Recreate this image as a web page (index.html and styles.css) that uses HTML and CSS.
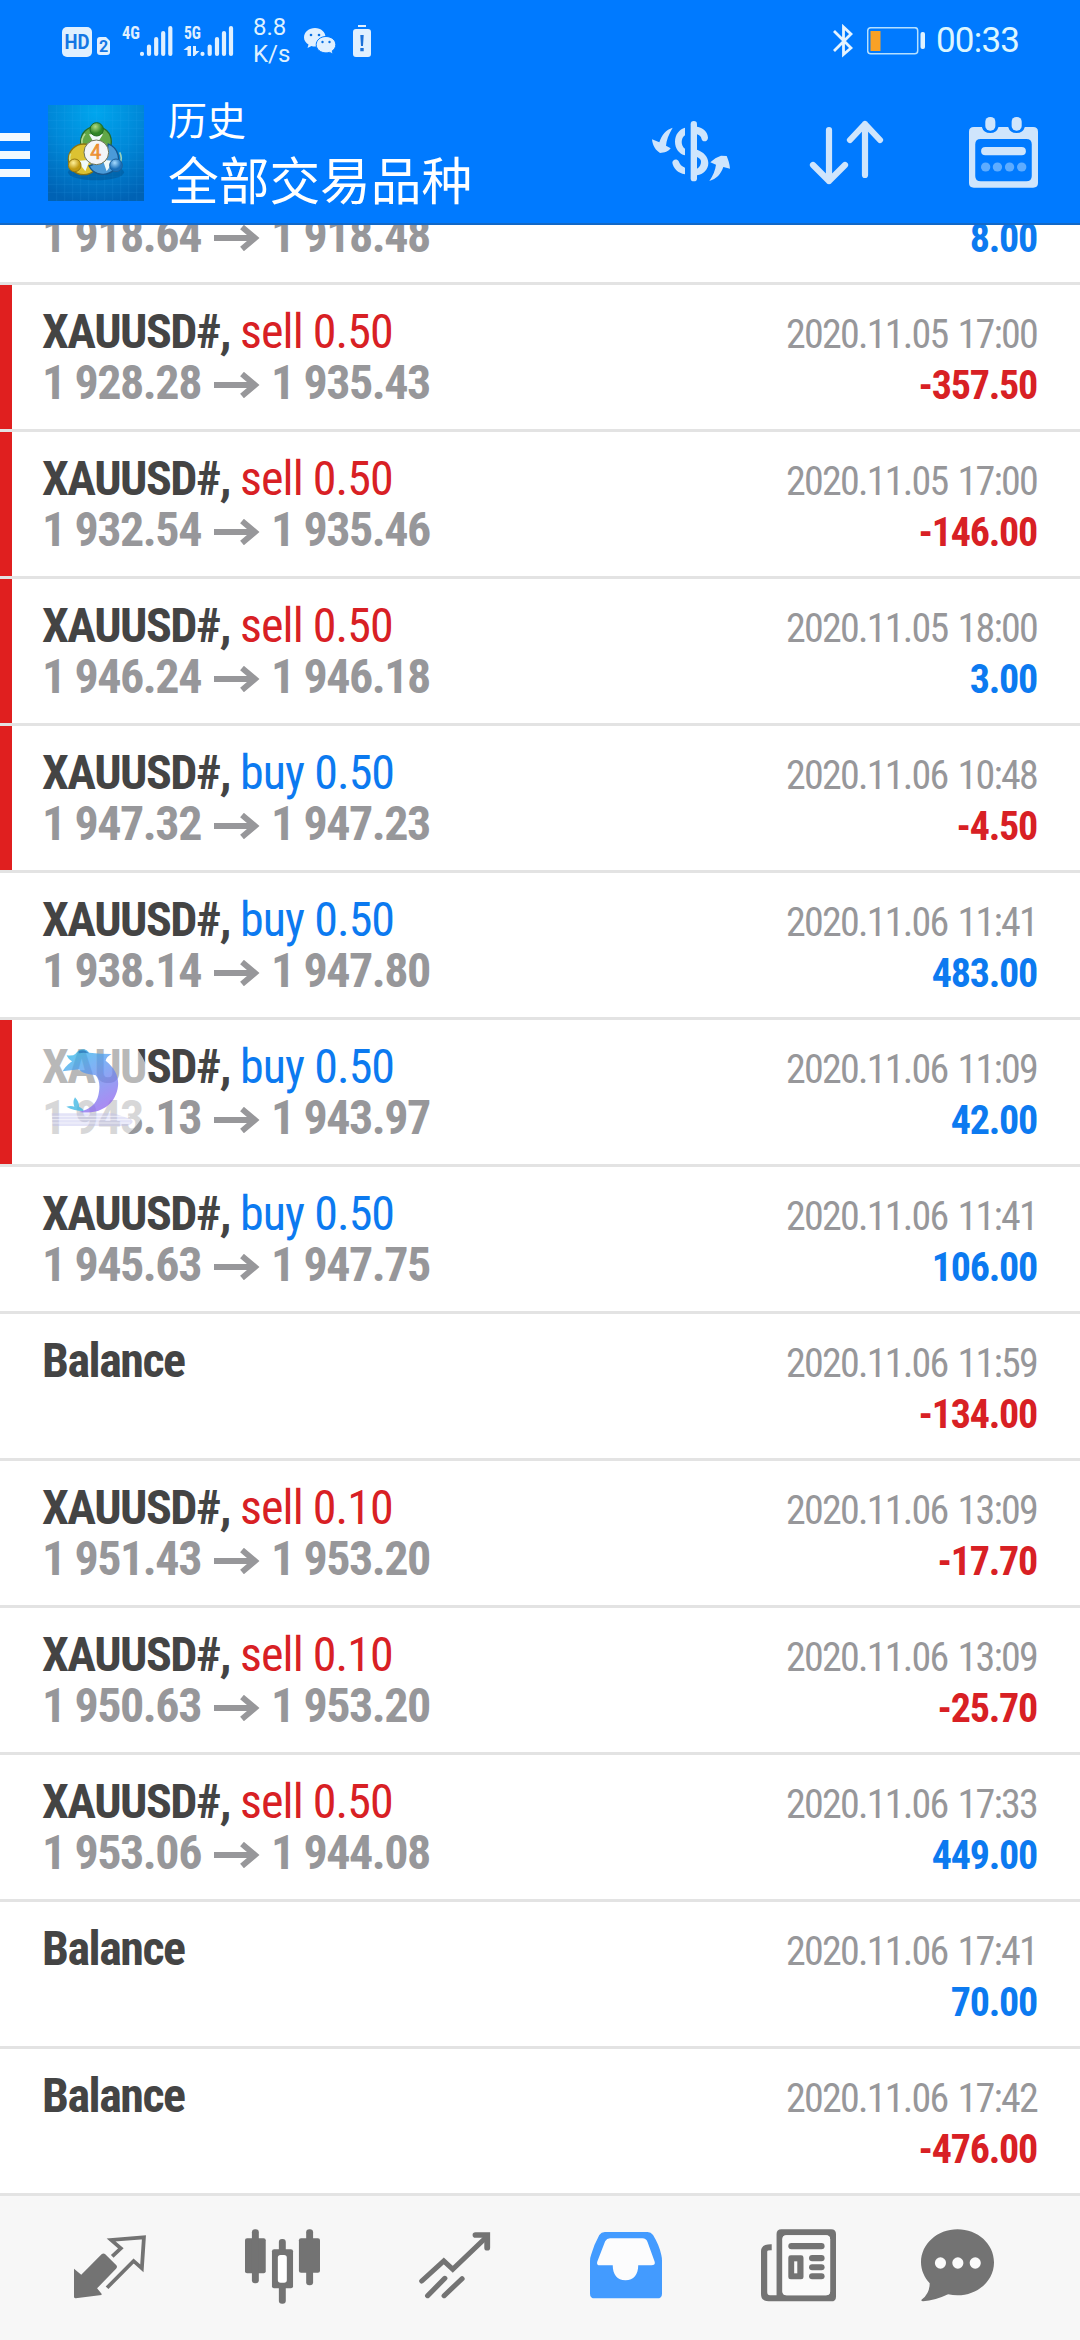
FILE: index.html
```html
<!DOCTYPE html>
<html lang="zh">
<head>
<meta charset="utf-8">
<title>历史</title>
<link rel="stylesheet" href="styles.css">
</head>
<body>
<svg class="defs" aria-hidden="true"><symbol id="arrow" viewBox="0 0 46 26"><path d="M0 13H41M28 2l13 11-13 11" fill="none" stroke="#97979a" stroke-width="5.800"/></symbol></svg>
<div class="screen">
  <header class="header">
    <div class="status">
      <svg class="status-net" width="172" height="36" viewBox="62 22 172 36" fill="#e0f0ff">
        <rect x="62" y="26" width="30" height="30" rx="5"/>
        <text x="77" y="48" class="hd" textLength="25" lengthAdjust="spacingAndGlyphs">HD</text>
        <path d="M97 39q0-3 3-3h6l4 4v11q0 3-3 3h-7q-3 0-3-3z"/>
        <text x="103.500" y="51" class="sim">2</text>
        <text x="131" y="38" class="net" textLength="18" lengthAdjust="spacingAndGlyphs">4G</text>
        <g stroke="#e0f0ff" stroke-width="4.200" stroke-linecap="round">
          <path d="M142 53v-.1M149 53v-7.500M156.200 53V38M163.200 53V32M170.300 53V27"/>
          <path d="M202.500 53v-.1M209.700 53v-7.500M217 53V38M224 53V32M231 53V27"/>
        </g>
        <text x="192.500" y="38" class="net" textLength="17" lengthAdjust="spacingAndGlyphs">5G</text>
        <path d="M187.500 55v-6h-4l5-4h2.500v10zM193 45h3v5h3.500l-5 5H193z"/>
      </svg>
      <div class="speed"><span>8.8</span><span>K/s</span></div>
      <svg class="status-chat" width="32" height="27" viewBox="304 28 32 27">
        <path fill="#e0f0ff" d="M315 28c6 0 10.500 4 10.500 9s-4.500 9.500-10.500 9.500c-1.500 0-2.500-.2-3.500-.6l-4 2 1-3.400C306 43 304 40.500 304 37.500c0-5.500 5-9.500 11-9.500z"/>
        <path fill="#e0f0ff" stroke="#007aff" stroke-width="1" d="M326 36.500c5.500 0 9.800 3.600 9.800 8.200 0 2.600-1.500 4.800-3.600 6.200l1 3.200-3.700-1.700c-1 .3-2.200.5-3.500.5-5.500 0-9.800-3.600-9.800-8.200s4.300-8.200 9.800-8.200z"/>
        <g fill="#0a6fe0"><circle cx="311" cy="35" r="1.300"/><circle cx="319" cy="35" r="1.300"/><circle cx="322.500" cy="42" r="1.200"/><circle cx="329.500" cy="42" r="1.200"/></g>
      </svg>
      <svg class="status-warn" width="18" height="32" viewBox="0 0 18 32">
        <path fill="#e0f0ff" d="M5 0h8v2H5zM3 4h12q3 0 3 3v22q0 3-3 3H3q-3 0-3-3V7q0-3 3-3z"/>
        <path fill="#1a70d8" d="M7.300 10h3.400l-.7 11H8zM7.300 23h3.400v3.200H7.300z"/>
      </svg>
      <span class="grow"></span>
      <svg width="20" height="34" viewBox="0 0 20 34" fill="none" stroke="#e6f4ff" stroke-width="2.800"><path d="M1 7l17 17-7.500 6.500V3L18 10 1 27"/></svg>
      <svg class="battery" width="60" height="28" viewBox="0 0 60 28"><rect x=".7" y=".7" width="50" height="26" rx="3" fill="none" stroke="#b5e0ff" stroke-width="1.500"/><rect x="3.500" y="4" width="10" height="20" fill="#f9a126"/><rect x="53.500" y="5" width="4.500" height="17" rx="2" fill="#dff2ff"/></svg>
      <span class="time">00:33</span>
    </div>
    <div class="appbar">
      <svg class="menu" width="30" height="44" viewBox="0 0 30 44" fill="#f2f9ff"><path d="M0 0h30v8H0zM0 18h30v8H0zM0 36h30v8H0z"/></svg>
      <svg class="logo" width="96" height="96" viewBox="24 30 288 288">
        <defs>
          <radialGradient id="bg" cx=".5" cy=".08" r=".95"><stop offset="0" stop-color="#00a6ee"/><stop offset=".5" stop-color="#0088d8"/><stop offset="1" stop-color="#0062b4"/></radialGradient>
          <radialGradient id="gr" cx=".4" cy=".3"><stop offset="0" stop-color="#b2dc84"/><stop offset="1" stop-color="#2f8527"/></radialGradient>
          <radialGradient id="ye" cx=".4" cy=".3"><stop offset="0" stop-color="#fff19a"/><stop offset="1" stop-color="#c29a10"/></radialGradient>
          <radialGradient id="bl" cx=".4" cy=".3"><stop offset="0" stop-color="#a6dbff"/><stop offset="1" stop-color="#1a6fb8"/></radialGradient>
        </defs>
        <path fill="url(#bg)" d="M24 30h288v288H24z"/>
        <path d="M50 30v288M74 30v288M98 30v288M122 30v288M146 30v288M170 30v288M194 30v288M218 30v288M242 30v288M266 30v288M290 30v288M24 52h288M24 76h288M24 100h288M24 124h288M24 148h288M24 172h288M24 196h288M24 220h288M24 244h288M24 268h288M24 292h288" stroke="#4cc0ff" stroke-opacity=".16" stroke-width="2"/>
        <ellipse cx="168" cy="232" rx="84" ry="24" fill="#003b70" opacity=".3"/>
        <circle cx="168" cy="140" r="46" fill="#62a747" stroke="#256b2b" stroke-width="4"/>
        <circle cx="131" cy="193" r="46" fill="#dcc232" stroke="#8b7410" stroke-width="4"/>
        <path d="M205 147a47 47 0 1 1-58 66q20-6 35-24 21-20 23-42z" fill="#4a9ad8" stroke="#15568e" stroke-width="4"/>
        <path d="M147 118l20 34 22-34zM112 198l38-4-14 35zM222 198l-34-4 12 35z" fill="#effafa"/>
        <path d="M135 116q-12 16-9 29M92 176q-8 18 4 32M239 172q9 18 1 30" fill="none" stroke="#d5f0b0" stroke-width="5" opacity=".7"/>
        <circle cx="170" cy="103" r="20" fill="url(#gr)" stroke="#1f6a22" stroke-width="3"/>
        <circle cx="104" cy="211" r="19" fill="url(#ye)" stroke="#987a0e" stroke-width="3"/>
        <circle cx="228" cy="211" r="19" fill="url(#bl)" stroke="#1c619c" stroke-width="3"/>
        <circle cx="169" cy="172" r="37" fill="#f4f5f7" stroke="#6b7358" stroke-width="3"/>
        <text x="167" y="193" class="logo-num">4</text>
      </svg>
      <div class="titles"><span class="sub">历史</span><span class="main">全部交易品种</span></div>
      <span class="grow"></span>
      <svg class="ic-dollar" width="80" height="64" viewBox="30 30 240 192" fill="#cfe5fc">
        <rect x="149" y="33" width="19" height="181" rx="9.500"/>
        <path d="M132 53v23c-13 7-13 33 0 40v20c-17-4-30-20-30-41s13-38 30-42zM168 50c17 3 32 14 33 33 0 12-16 15-19 5-2-9-6-13-14-15zM168 119c20 7 34 21 34 40 0 20-15 34-34 37v-20c9-6 12-14 12-21 0-6-4-10-12-14zM132 193c-21-4-35-18-38-35 0-10 14-14 19-4 3 9 9 16 19 19z"/>
        <path d="M95 53C83 73 76 91 75 107l14 8c-6 9-19 14-32 14C44 121 35 108 33 88l22 9c7-23 20-38 40-44zM205 213c11-16 18-33 20-49l-17-7c10-10 20-16 32-20l17 1c5 12 9 24 10 38l-20-5c-7 21-21 36-42 42z"/>
      </svg>
      <svg class="ic-sort" width="76" height="66" viewBox="808 120 76 66" fill="none" stroke="#cfe5fc" stroke-width="6.200" stroke-linecap="round" stroke-linejoin="round"><path d="M828 130v51M812 165l16 16 16-16M864 175v-51M849 140l15-16 15 16"/></svg>
      <svg class="ic-cal" width="69" height="71" viewBox="1242 350 199 213" preserveAspectRatio="none">
        <path fill="#cfe5fc" fill-rule="evenodd" d="M1256 380h23q5 18 24 18t24-18h28q5 18 24 18t24-18h24q14 0 14 14v154q0 14-14 14h-171q-14 0-14-14V394q0-14 14-14zM1276 416q-16 0-16 16v95q0 16 16 16h131q16 0 16-16v-95q0-16-16-16z"/>
        <g fill="#cfe5fc"><rect x="1289" y="350" width="29" height="41" rx="14"/><rect x="1365" y="350" width="29" height="41" rx="14"/><rect x="1277" y="440" width="129" height="25" rx="12"/></g>
        <g fill="#5eacff"><circle cx="1290" cy="500" r="13.500"/><circle cx="1324" cy="500" r="13.500"/><circle cx="1359" cy="500" r="13.500"/><circle cx="1394" cy="500" r="13.500"/></g>
      </svg>
    </div>
  </header>

  <main class="list">
    <div class="row"><div class="left"><p><b>XAUUSD#,</b> <span class="sell">sell 0.50</span></p><p class="price">1 918.64<svg class="arrow"><use href="#arrow"/></svg>1 918.48</p></div><div class="right"><p class="date">2020.11.05 17:00</p><p class="up">8.00</p></div></div>
    <div class="row marked"><div class="left"><p><b>XAUUSD#,</b> <span class="sell">sell 0.50</span></p><p class="price">1 928.28<svg class="arrow"><use href="#arrow"/></svg>1 935.43</p></div><div class="right"><p class="date">2020.11.05 17:00</p><p class="down">-357.50</p></div></div>
    <div class="row marked"><div class="left"><p><b>XAUUSD#,</b> <span class="sell">sell 0.50</span></p><p class="price">1 932.54<svg class="arrow"><use href="#arrow"/></svg>1 935.46</p></div><div class="right"><p class="date">2020.11.05 17:00</p><p class="down">-146.00</p></div></div>
    <div class="row marked"><div class="left"><p><b>XAUUSD#,</b> <span class="sell">sell 0.50</span></p><p class="price">1 946.24<svg class="arrow"><use href="#arrow"/></svg>1 946.18</p></div><div class="right"><p class="date">2020.11.05 18:00</p><p class="up">3.00</p></div></div>
    <div class="row marked"><div class="left"><p><b>XAUUSD#,</b> <span class="buy">buy 0.50</span></p><p class="price">1 947.32<svg class="arrow"><use href="#arrow"/></svg>1 947.23</p></div><div class="right"><p class="date">2020.11.06 10:48</p><p class="down">-4.50</p></div></div>
    <div class="row"><div class="left"><p><b>XAUUSD#,</b> <span class="buy">buy 0.50</span></p><p class="price">1 938.14<svg class="arrow"><use href="#arrow"/></svg>1 947.80</p></div><div class="right"><p class="date">2020.11.06 11:41</p><p class="up">483.00</p></div></div>
    <div class="row marked"><div class="left"><p><b>XAUUSD#,</b> <span class="buy">buy 0.50</span></p><p class="price">1 943.13<svg class="arrow"><use href="#arrow"/></svg>1 943.97</p></div><div class="right"><p class="date">2020.11.06 11:09</p><p class="up">42.00</p></div></div>
    <div class="row"><div class="left"><p><b>XAUUSD#,</b> <span class="buy">buy 0.50</span></p><p class="price">1 945.63<svg class="arrow"><use href="#arrow"/></svg>1 947.75</p></div><div class="right"><p class="date">2020.11.06 11:41</p><p class="up">106.00</p></div></div>
    <div class="row"><div class="left"><p><b>Balance</b></p></div><div class="right"><p class="date">2020.11.06 11:59</p><p class="down">-134.00</p></div></div>
    <div class="row"><div class="left"><p><b>XAUUSD#,</b> <span class="sell">sell 0.10</span></p><p class="price">1 951.43<svg class="arrow"><use href="#arrow"/></svg>1 953.20</p></div><div class="right"><p class="date">2020.11.06 13:09</p><p class="down">-17.70</p></div></div>
    <div class="row"><div class="left"><p><b>XAUUSD#,</b> <span class="sell">sell 0.10</span></p><p class="price">1 950.63<svg class="arrow"><use href="#arrow"/></svg>1 953.20</p></div><div class="right"><p class="date">2020.11.06 13:09</p><p class="down">-25.70</p></div></div>
    <div class="row"><div class="left"><p><b>XAUUSD#,</b> <span class="sell">sell 0.50</span></p><p class="price">1 953.06<svg class="arrow"><use href="#arrow"/></svg>1 944.08</p></div><div class="right"><p class="date">2020.11.06 17:33</p><p class="up">449.00</p></div></div>
    <div class="row"><div class="left"><p><b>Balance</b></p></div><div class="right"><p class="date">2020.11.06 17:41</p><p class="up">70.00</p></div></div>
    <div class="row"><div class="left"><p><b>Balance</b></p></div><div class="right"><p class="date">2020.11.06 17:42</p><p class="down">-476.00</p></div></div>
  </main>

  <nav class="nav">
    <svg width="72" height="80" viewBox="215 140 209 240" preserveAspectRatio="none" fill="#737373">
      <path d="M215 265l21 18 59-61q5-5 10-1l33 34q4 5-1 10l-55 59 13 16v4l-75 10q-5 0-5-5z"/>
      <path fill="none" stroke="#737373" stroke-width="11" d="M326 228l25-24-28-25 95-8-6 93-24-22-77 80"/>
    </svg>
    <svg width="75" height="80" viewBox="709 140 217 240" preserveAspectRatio="none" fill="#737373">
      <rect x="709" y="174" width="60" height="105" rx="6"/><rect x="729" y="147" width="20" height="162" rx="9"/>
      <rect x="865" y="174" width="61" height="103" rx="6"/><rect x="886" y="147" width="20" height="168" rx="9"/>
      <rect x="787" y="207" width="61" height="117" rx="6"/><rect x="807" y="176" width="20" height="194" rx="9"/><rect x="804" y="224" width="26" height="83" rx="8" fill="#fff"/>
    </svg>
    <svg width="72" height="80" viewBox="1213 140 209 240" preserveAspectRatio="none" fill="none" stroke="#737373" stroke-width="15" stroke-linecap="round">
      <path d="M1221 302l64-60 26 25 98-97M1238 346l50-52M1286 346l52-51"/><path stroke-width="17" d="M1377 164h34v38"/>
    </svg>
    <svg width="72" height="80" viewBox="147 140 209 240" preserveAspectRatio="none">
      <path fill="#439bff" d="M190 155h124q10 0 16 9 18 30 24 60 2 8 2 18v98q0 14-14 14H161q-14 0-14-14v-98q0-10 3-18 8-30 24-60 6-9 16-9z"/>
      <path fill="#fcfcfd" d="M205 174h94q11 0 15 11l21 60q2 10-10 10h-38c0 27-13 45-37 45s-37-18-37-45h-37q-11 0-8-11l23-61q5-9 14-9z"/>
    </svg>
    <svg width="75" height="80" viewBox="646 140 217 240" preserveAspectRatio="none" fill="#737373">
      <path fill-rule="evenodd" d="M705 147h144q14 0 14 14v188q0 14-14 14H668q-22 0-22-22V212q0-21 31-20v18q-13-1-13 4v121q0 10 8 10h19V161q0-14 14-14zM720 165q-12 0-12 12v156q0 12 12 12h114q12 0 12-12V177q0-12-12-12z"/>
      <rect x="708" y="165" width="138" height="180" rx="12" fill="#fafafa"/><rect x="725" y="188" width="105" height="19" rx="9"/><rect x="725" y="225" width="44" height="72" rx="7"/><rect x="742" y="243" width="9" height="36" fill="#fafafa"/>
      <rect x="785" y="224" width="45" height="19" rx="9"/><rect x="785" y="252" width="45" height="18" rx="9"/><rect x="785" y="279" width="45" height="18" rx="9"/>
    </svg>
    <svg class="nav-chat" width="73" height="80" viewBox="1108 140 210 240" preserveAspectRatio="none" fill="#737373">
      <path d="M1213 147c58 0 105 44 105 99s-47 99-105 99q-14 0-27-3-38 19-72 21-8-1-3-6 22-18 22-48c-15-17-25-39-25-63 0-55 47-99 105-99z"/>
      <g fill="#fafafa"><ellipse cx="1164" cy="248" rx="16" ry="17"/><ellipse cx="1214" cy="248" rx="16" ry="17"/><ellipse cx="1264" cy="248" rx="16" ry="17"/></g>
    </svg>
  </nav>

  <svg class="dolphin" viewBox="-75 -54 390 390">
    <defs><linearGradient id="dol" x1="0" y1="0" x2=".5" y2="1"><stop offset="0" stop-color="#20c2e6"/><stop offset=".4" stop-color="#4f9cf2"/><stop offset="1" stop-color="#8a66ee"/></linearGradient></defs>
    <circle cx="120" cy="141" r="181" fill="#fff" opacity=".62"/>
    <path fill="#b9b9ec" opacity=".4" d="M5 220h185l50 16q20 10-10 22H8z"/>
    <path stroke="#fff" stroke-opacity=".6" stroke-width="3" d="M0 229h240M0 239h240M0 249h240"/>
    <g opacity=".74"><path fill="url(#dol)" d="M50 46q20 2 26-4 10-14 24-14 10 0 18 10 34 4 67 4-16 8-18 20c28 22 40 48 37 76-6 54-52 88-117 78q50-12 58-50c6-28 4-46-8-60-20-4-40-4-50-18-14 2-34 4-49 6 10-18 26-28 28-30-8-4-14-12-16-18z"/>
    <path fill="#35b4e4" d="M101 213q-28 0-52-13 14-4 24 0-6-14 2-28 14 16 12 28 12 5 14 13z"/></g>
    <path fill="#1557a8" opacity=".5" d="M86 32q20-5 30 8-14-4-30 0z"/>
  </svg>
</div>
</body>
</html>
```
FILE: styles.css
```css
* { box-sizing: border-box; }
body { margin: 0; background: #fff; }
p { margin: 0; }
svg { display: block; flex: none; }
.defs { display: none; }

.screen {
  position: relative;
  display: flex;
  flex-direction: column;
  width: 1080px;
  height: 2340px;
  overflow: hidden;
  font-family: "Roboto Condensed", Roboto, "Noto Sans CJK SC", sans-serif;
}
.grow { flex: 1; }

/* Header */
.header {
  flex: none;
  height: 225px;
  background: #007aff;
  border-bottom: 2px solid #1368c6;
  color: #fff;
}
.status {
  display: flex;
  align-items: center;
  height: 82px;
  padding: 0 60px 0 62px;
}
.status-net { overflow: visible; }
.speed {
  display: flex;
  flex-direction: column;
  margin-left: 19px;
  width: 40px;
  font: 24px/27px Roboto, sans-serif;
  color: #dff1ff;
}
.status-chat { margin-left: 11px; }
.status-warn { margin-left: 17px; }
.battery { margin-left: 14px; }
.time {
  width: 84px;
  margin-left: 9px;
  font: 35px/42px Roboto, sans-serif;
  letter-spacing: -0.8px;
  color: #dcf6ff;
  white-space: nowrap;
}
.hd { font: bold 20px Roboto, sans-serif; fill: #1476e4; text-anchor: middle; }
.sim { font: bold 16px Roboto, sans-serif; fill: #1476e4; text-anchor: middle; }
.net { font: bold 19px "Roboto Condensed", Roboto, sans-serif; text-anchor: middle; }

.appbar {
  display: flex;
  align-items: flex-start;
  height: 141px;
  padding: 12px 42px 0 0;
}
.menu { margin-top: 39px; }
.logo { margin: 11px 0 0 18px; }
.logo-num { font: 58px Roboto, sans-serif; fill: #f29a3d; stroke: #e98a2e; stroke-width: 2; text-anchor: middle; }
.titles {
  display: flex;
  flex-direction: column;
  margin: -4px 0 0 24px;
  font-family: "Noto Sans CJK SC", sans-serif;
}
.sub { font-size: 39px; line-height: 56px; }
.main { font-size: 50.7px; line-height: 65px; }
.ic-dollar { margin-top: 26px; }
.ic-sort { margin: 26px 0 0 78px; }
.ic-cal { margin: 23px 0 0 84px; }

/* History list; its last divider doubles as the navigation's top edge */
.list {
  flex: none;
  display: flex;
  flex-direction: column;
  justify-content: flex-end;
  height: 1971px;
  overflow: hidden;
}
.row {
  flex: none;
  display: flex;
  justify-content: space-between;
  height: 147px;
  padding: 0 42px 0 30px;
  border-bottom: 3px solid #e3e3e3;
  white-space: nowrap;
}
.row::before { content: ""; width: 12px; margin-left: -30px; }
.marked::before { background: #e01f1f; }
.left {
  flex: 1;
  padding: 21px 0 0 30px;
  font-size: 48px;
  line-height: 51px;
  letter-spacing: -0.95px;
  color: #444;
}
.left b { letter-spacing: -1.5px; }
.right {
  padding: 24px 1px 0 0;
  font-size: 40px;
  line-height: 51px;
  letter-spacing: -1.25px;
  text-align: right;
}
.price { display: flex; align-items: center; font-weight: 700; letter-spacing: -1.45px; color: #97979a; }
.arrow { width: 46px; height: 26px; margin: 4px 11px 0 13px; }
.date { letter-spacing: -1.75px; word-spacing: 2.5px; color: #97979a; }
.sell { color: #d82024; }
.buy { color: #0c7af0; }
.up, .down { font-weight: 700; }
.up { color: #0c7af0; }
.down { color: #d82024; }

/* Bottom navigation */
.nav {
  flex: none;
  display: flex;
  align-items: flex-start;
  gap: 99px;
  height: 144px;
  padding: 31px 0 0 74px;
  background: #f7f7f7;
}
.nav-chat { margin-left: -14px; }

/* Floating assistant above the list */
.dolphin { position: absolute; left: 25px; top: 1022px; width: 130px; height: 130px; }
```
